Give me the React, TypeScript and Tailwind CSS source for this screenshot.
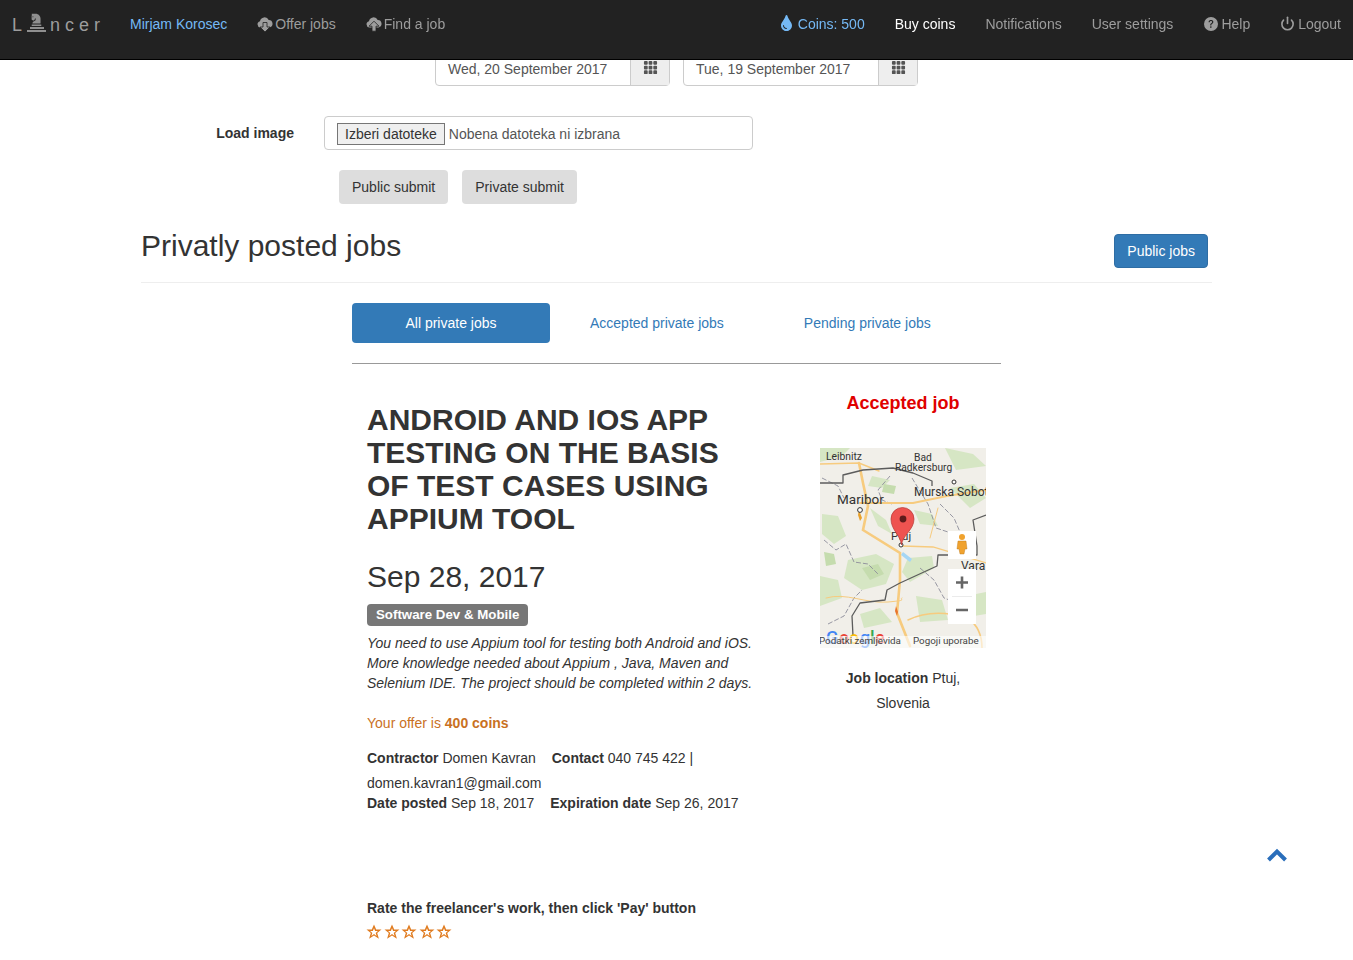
import React from "react";
import { FaChessKnight, FaTint } from "react-icons/fa";
import { BsGrid3X3GapFill, BsQuestionCircleFill } from "react-icons/bs";
import { Power } from "lucide-react";

const navLink = "block px-[15px] pt-[14px] leading-5 text-[14px] whitespace-nowrap";

function CloudIcon({ up }: { up?: boolean }) {
  return (
    <svg viewBox="0 0 16 16" className="mt-[2px] h-4 w-4" fill="currentColor">
      <path d="M3.4 11.5A3.2 3.2 0 0 1 3 5.2 4.6 4.6 0 0 1 11.7 4 3.8 3.8 0 0 1 12.6 11.5z" />
      {up ? (
        <path d="M8 5.2l5 5h-3v5H6v-5H3z" stroke="#222" strokeWidth="0.8" />
      ) : (
        <path d="M6 6.5h4v4.500h3l-5 5-5-5h3z" stroke="#222" strokeWidth="0.8" />
      )}
    </svg>
  );
}

function StarEmpty() {
  return (
    <svg viewBox="0 0 16 16" className="h-4 w-4" fill="currentColor">
      <path
        fillRule="evenodd"
        d="M8 .6l2.2 5h5.300l-4.300 3.500 1.700 5.700L8 11.500l-4.900 3.300 1.700-5.700L.5 5.600h5.300zM8 4.200L6.900 7.100H4.100l2.200 1.800-.9 3L8 10.100l2.600 1.800-.9-3 2.200-1.800H9.100z"
      />
    </svg>
  );
}

function DateField({ value }: { value: string }) {
  return (
    <div className="flex h-[34px] w-[235px] rounded-b border border-[#ccc] text-[14px] text-[#555]">
      <div className="flex-1 pl-3 pt-[6px] leading-5">{value}</div>
      <div className="flex w-[39px] justify-center border-l border-[#ccc] bg-[#eee] pt-[7px] text-[#555]">
        <BsGrid3X3GapFill size={15} />
      </div>
    </div>
  );
}

function MapThumb() {
  return (
    <svg viewBox="0 0 166 200" className="block h-[200px] w-[166px]" style={{ fontFamily: "Roboto, Arial, sans-serif" }}>
      <rect width="166" height="200" fill="#f1efe9" />
      {/* green patches */}
      <g fill="#d6e6c4">
        <path d="M0 0h30l-8 8-22 6z" />
        <path d="M52 28l18 4-8 8-14-2z" />
        <path d="M125 0l28 6 13 12-30 4z" />
        <path d="M2 66l16 2 8 20-12 8-12-10z" />
        <path d="M50 60l16 12 6 14-14-8z" />
        <path d="M94 62l18 4 6 12-18-2z" />
        <path d="M28 112l28-6 18 10-8 20-24 6-18-12z" />
        <path d="M88 110l24-2 2 12-24 14-8-10z" />
        <path d="M0 128l18 4 4 18-22 8z" />
        <path d="M96 148l26 4 6 20-28 2z" />
        <path d="M130 40l24-4 12 14-16 10z" />
        <path d="M40 166l20-6 12 14-28 6z" />
        <path d="M136 150l30-6v22l-24 4z" />
      </g>
      <g fill="#c5dcae">
        <path d="M42 120l16-4 6 10-14 6z" />
        <path d="M4 104l10 2 2 10-10 2z" />
        <path d="M64 36l12 2-2 8-12-2z" />
      </g>
      {/* minor roads, grey */}
      <g fill="none" stroke="#8d8d9b" strokeWidth="0.9" strokeDasharray="5 2">
        <path d="M4 92l12 10 10-6 8 18 14 2 10 10" />
        <path d="M92 30l16 26 8 24 18 6" />
        <path d="M70 28l-12 14 4 10 10 4" />
        <path d="M8 176l16-8 10-18 8-8" />
        <path d="M100 120l14 12 10 18 16 6" />
        <path d="M120 56l14 14 6 14" />
        <path d="M2 30l16 8 6 12" />
      </g>
      {/* roads */}
      <g fill="none" stroke="#f7cb7e" strokeLinecap="round">
        <path d="M39 15l4 20 5 23-5 24 37 23v27l-3 33 13 33" strokeWidth="2.6" />
        <path d="M40 55h23l30 0 34-7 39-6" strokeWidth="2.2" />
        <path d="M0 16l39-1 20 8" strokeWidth="1.4" />
        <path d="M82 98l31 1 53 16" strokeWidth="1.3" />
        <path d="M6 150c20-6 40 6 62 4s10-2 14-4" strokeWidth="1" />
        <path d="M88 172c20-10 40-8 60-2 8 6 14 16 14 30" strokeWidth="1.6" />
        <path d="M118 60l-8 30" strokeWidth="1" />
      </g>
      {/* country border */}
      <g fill="none" stroke="#5c5c5c" strokeWidth="1.300" strokeLinejoin="round">
        <path d="M0 35h23v-8l20-5 30-2 20 5 19 8v5" />
        <path d="M166 67l-13 5 4 26v9h-39l-1 11-37 17-13 7-2 10-25 3-8 13 1 20" />
      </g>
      <path d="M83 104l9 7-2 3-9-7z" fill="#a5d6f5" />
      <path d="M76 158l2 6-1 4-2-5z" fill="#e8742c" />
      <path d="M39 62l3 8-2 3-2-6z" fill="#e8a12c" />
      {/* labels */}
      <g fill="#333">
        <text x="6" y="12" fontSize="10.300">Leibnitz</text>
        <text x="94" y="13" fontSize="10.300">Bad</text>
        <text x="75" y="23" fontSize="10.200">Radkersburg</text>
        <text x="17" y="56" fontSize="13.500">Maribor</text>
        <text x="94" y="48" fontSize="12">Murska Sobota</text>
        <text x="71" y="92" fontSize="11.500">Ptuj</text>
        <text x="141" y="122" fontSize="12">Vara</text>
      </g>
      <circle cx="40" cy="62" r="2.400" fill="#fff" stroke="#333" />
      <circle cx="134" cy="34" r="2" fill="#fff" stroke="#333" />
      <circle cx="81" cy="97" r="2" fill="#fff" stroke="#333" />
      {/* marker */}
      <path d="M81.500 97c-1-10-10.500-15-10.500-26a11.500 11.500 0 0 1 23 0c0 11-11.500 16-12.500 26z" fill="#ee5350" stroke="#b53a36" strokeWidth="0.7" />
      <circle cx="83" cy="71" r="3.400" fill="#5e1b1b" />
      {/* street view */}
      <rect x="128" y="83" width="28" height="28" fill="#fff" />
      <circle cx="142" cy="89" r="3" fill="#f0a22e" />
      <path d="M138 93h8l1 8h-2l-1 5h-4l-1-5h-2z" fill="#f0a22e" stroke="#b87414" strokeWidth="0.400" />
      {/* zoom */}
      <rect x="128" y="121" width="28" height="55" fill="#fff" />
      <rect x="132" y="148" width="20" height="0.800" fill="#e6e6e6" />
      <path d="M136 134.500h12M142 128.500v12M136 162h12" stroke="#666" strokeWidth="2.600" fill="none" />
      {/* google + attribution */}
      <g fontSize="18" fontWeight="500">
        <text x="6" y="196" fill="#4285f4">G</text>
        <text x="19" y="196" fill="#ea4335">o</text>
        <text x="29" y="196" fill="#fbbc05">o</text>
        <text x="40" y="196" fill="#4285f4">g</text>
        <text x="50" y="196" fill="#34a853">l</text>
        <text x="55" y="196" fill="#ea4335">e</text>
      </g>
      <rect y="188" width="166" height="12" fill="#fff" opacity="0.6" />
      <g fontSize="9.800" fill="#444">
        <text x="-1" y="196">Podatki zemljevida</text>
        <text x="93" y="196">Pogoji uporabe</text>
      </g>
    </svg>
  );
}

export default function App() {
  return (
    <div className="min-h-[960px] bg-white text-[14px] leading-5 text-[#333]" style={{ fontFamily: '"Liberation Sans", Arial, sans-serif' }}>
      {/* top bar */}
      <nav className="fixed inset-x-0 top-0 z-10 flex h-[60px] justify-between border-b border-black bg-[#222] text-[#9d9d9d]">
        <div className="flex">
          <div className="flex w-[115px] items-start pl-3 pt-[15px] text-[18px] leading-5 tracking-[5px]">
            <span>L</span>
            <span className="mr-[4px] mt-[-2px] flex w-[19px] flex-col items-center text-[#8f8f8f]">
              <FaChessKnight size={13} />
              <span className="mt-[1px] h-[2px] w-[14px] bg-[#8f8f8f]" />
              <span className="mt-[1px] h-[2px] w-[19px] bg-[#8f8f8f]" />
            </span>
            <span>ncer</span>
          </div>
          <a className={navLink + " text-[#75b9f5]"}>Mirjam Korosec</a>
          <a className={navLink + " flex items-start gap-[2px]"}><CloudIcon /> Offer jobs</a>
          <a className={navLink + " flex items-start gap-[2px]"}><CloudIcon up /> Find a job</a>
        </div>
        <div className="mr-[-3px] flex">
          <a className={navLink + " flex items-start gap-[6px] text-[#75b9f5]"}><FaTint className="mt-[1px] h-4 w-[11px]" /> Coins: 500</a>
          <a className={navLink + " text-white"}>Buy coins</a>
          <a className={navLink}>Notifications</a>
          <a className={navLink}>User settings</a>
          <a className={navLink + " flex items-start gap-[3px] pl-4"}><BsQuestionCircleFill size={14} className="mt-[3px]" /> Help</a>
          <a className={navLink + " flex items-start gap-[3px]"}><Power size={15} strokeWidth={2.6} className="mt-[2px]" /> Logout</a>
        </div>
      </nav>

      <div className="mx-auto w-[1071px] pt-[52px]">
        <div className="ml-[294px] flex gap-[13px]">
          <DateField value="Wed, 20 September 2017" />
          <DateField value="Tue, 19 September 2017" />
        </div>

        <div className="mt-[30px] flex items-center">
          <label className="w-[153px] text-right font-bold">Load image</label>
          <div className="ml-[30px] flex h-[34px] w-[429px] items-center rounded border border-[#ccc] pl-3 pt-[1px] text-[#555]">
            <span className="mr-1 h-[22px] border border-[#767676] bg-[#efefef] px-[7px] leading-5 text-[#333]">Izberi datoteke</span>
            Nobena datoteka ni izbrana
          </div>
        </div>

        <div className="ml-[198px] mt-5 flex gap-[14px]">
          <button className="h-[34px] rounded bg-[#ddd] px-[13px]">Public submit</button>
          <button className="h-[34px] rounded bg-[#ddd] px-[13px]">Private submit</button>
        </div>

        <div className="mt-[25px] flex items-start justify-between border-b border-[#eee] pb-[14px]">
          <h1 className="text-[30px] leading-[33px]">Privatly posted jobs</h1>
          <button className="mr-1 mt-[5px] h-[34px] rounded border border-[#2e6da4] bg-[#337ab7] px-3 text-white">Public jobs</button>
        </div>

        <div className="ml-[211px] mt-5 w-[649px]">
          <div className="flex h-[61px] border-b border-[#999] pb-5 text-[#337ab7]">
            <a className="flex w-[198px] items-center justify-center rounded bg-[#337ab7] text-white">All private jobs</a>
            <a className="flex items-center px-10">Accepted private jobs</a>
            <a className="flex items-center px-10">Pending private jobs</a>
          </div>

          <div className="flex">
            <div className="w-[453px] pl-[15px] pr-[45px] pt-[39px]">
              <h2 className="text-[30px] font-bold uppercase leading-[33px]">Android and iOS app testing on the basis of test cases using Appium tool</h2>
              <div className="mt-[25px] text-[30px] leading-[33px]">Sep 28, 2017</div>
              <div className="mt-[11px] inline-block h-[22px] rounded bg-[#777] px-[9px] align-top text-[13.3px] font-bold leading-[21px] text-white">Software Dev &amp; Mobile</div>
              <p className="mt-[7px] italic">You need to use Appium tool for testing both Android and iOS. More knowledge needed about Appium , Java, Maven and Selenium IDE. The project should be completed within 2 days.</p>
              <p className="mt-5 text-[#c9711f]">Your offer is <b>400 coins</b></p>
              <div className="mt-[15px]"><b>Contractor</b> Domen Kavran <span className="ml-3"><b>Contact</b> 040 745 422 |</span></div>
              <div className="mt-[5px]">domen.kavran1@gmail.com</div>
              <div><b>Date posted</b> Sep 18, 2017 <span className="ml-3"><b>Expiration date</b> Sep 26, 2017</span></div>
              <div className="mt-[85px] font-bold">Rate the freelancer's work, then click 'Pay' button</div>
              <div className="ml-[-1px] mt-[6px] flex gap-[1.5px] text-[#e07b1f]">
                <StarEmpty />
                <StarEmpty />
                <StarEmpty />
                <StarEmpty />
                <StarEmpty />
              </div>
            </div>

            <div className="w-[196px] px-[15px] pt-[29px] text-center">
              <div className="text-[18px] font-bold leading-5 text-[#e00000]">Accepted job</div>
              <div className="mt-[35px]"><MapThumb /></div>
              <p className="mt-[18px] leading-[25px]"><b>Job location</b> Ptuj, Slovenia</p>
            </div>
          </div>
        </div>
      </div>

      <div className="fixed left-[1267px] top-[848px] text-[#2a6ebb]">
        <svg viewBox="0 0 20 14" className="h-[14px] w-5" fill="none" stroke="currentColor" strokeWidth="4">
          <path d="M1.500 12L10 3.500 18.500 12" />
        </svg>
      </div>
    </div>
  );
}
